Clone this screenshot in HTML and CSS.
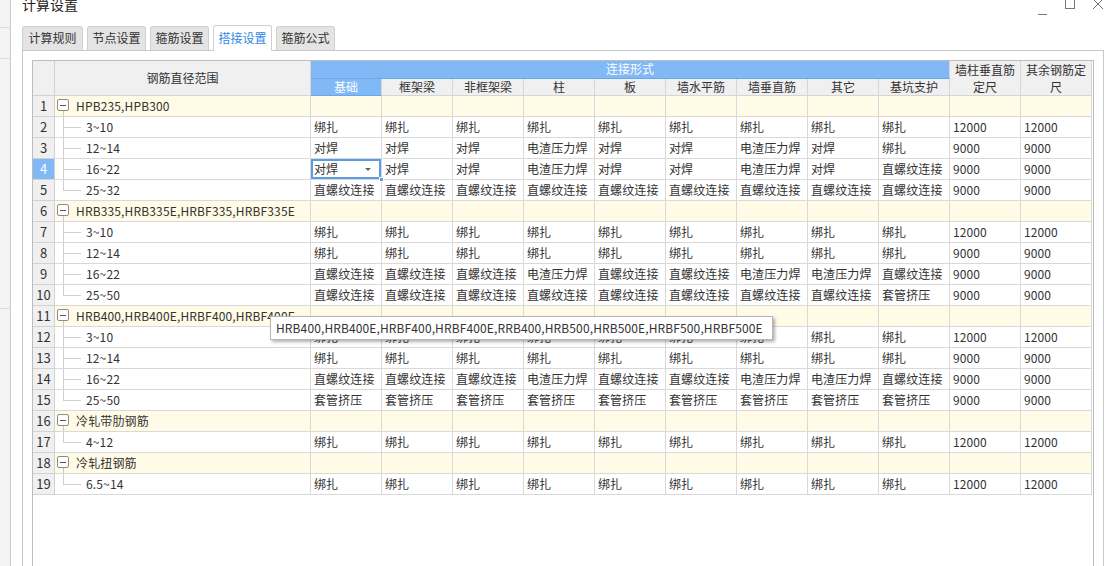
FILE: index.html
```html
<!DOCTYPE html>
<html lang="zh-CN">
<head>
<meta charset="utf-8">
<title>计算设置</title>
<link rel="stylesheet" href="styles.css">
</head>
<body>
<div class="app">
  <div class="side">
    <div class="side-a"></div>
    <div class="side-b"></div>
    <div class="side-c"></div>
    <div class="side-d"></div>
  </div>
  <div class="dialog">
    <div class="titlebar">
      <div class="title">计算设置</div>
      <svg class="controls" width="70" height="20" viewBox="0 0 70 20">
        <line x1="3" y1="14.5" x2="12" y2="14.5" stroke="#777" stroke-width="1"/>
        <rect x="30.5" y="-3" width="9" height="11.5" fill="none" stroke="#777" stroke-width="1"/>
        <line x1="58" y1="-1" x2="68" y2="9" stroke="#777" stroke-width="1"/>
        <line x1="68" y1="-1" x2="58" y2="9" stroke="#777" stroke-width="1"/>
      </svg>
    </div>
    <div class="tabs">
      <div class="tab first">计算规则</div>
      <div class="tab">节点设置</div>
      <div class="tab">箍筋设置</div>
      <div class="tab active">搭接设置</div>
      <div class="tab">箍筋公式</div>
    </div>
    <div class="panel">
      <div class="grid">
        <table>
          <colgroup>
            <col class="c-rn"><col class="c-nm">
            <col class="c-d"><col class="c-d"><col class="c-d"><col class="c-d"><col class="c-d"><col class="c-d"><col class="c-d"><col class="c-d"><col class="c-d"><col class="c-d"><col class="c-d">
          </colgroup>
          <thead>
            <tr>
              <th rowspan="2" class="rn"></th>
              <th rowspan="2">钢筋直径范围</th>
              <th colspan="9" class="blue top">连接形式</th>
              <th rowspan="2" class="wrap">墙柱垂直筋定尺</th>
              <th rowspan="2" class="wrap">其余钢筋定尺</th>
            </tr>
            <tr>
              <th class="blue">基础</th>
              <th>框架梁</th>
              <th>非框架梁</th>
              <th>柱</th>
              <th>板</th>
              <th>墙水平筋</th>
              <th>墙垂直筋</th>
              <th>其它</th>
              <th>基坑支护</th>
            </tr>
          </thead>
          <tbody>
            <tr class="grp"><td class="rn">1</td><td class="nm"><span class="box"></span>HPB235,HPB300</td><td></td><td></td><td></td><td></td><td></td><td></td><td></td><td></td><td></td><td></td><td></td></tr>
            <tr><td class="rn">2</td><td class="nm"><span class="tree"></span>3~10</td><td>绑扎</td><td>绑扎</td><td>绑扎</td><td>绑扎</td><td>绑扎</td><td>绑扎</td><td>绑扎</td><td>绑扎</td><td>绑扎</td><td>12000</td><td>12000</td></tr>
            <tr><td class="rn">3</td><td class="nm"><span class="tree"></span>12~14</td><td>对焊</td><td>对焊</td><td>对焊</td><td>电渣压力焊</td><td>对焊</td><td>对焊</td><td>电渣压力焊</td><td>对焊</td><td>绑扎</td><td>9000</td><td>9000</td></tr>
            <tr><td class="rn cur">4</td><td class="nm"><span class="tree"></span>16~22</td><td class="sel">对焊<span class="caret"></span><span class="handle"></span></td><td>对焊</td><td>对焊</td><td>电渣压力焊</td><td>对焊</td><td>对焊</td><td>电渣压力焊</td><td>对焊</td><td>直螺纹连接</td><td>9000</td><td>9000</td></tr>
            <tr><td class="rn">5</td><td class="nm"><span class="tree last"></span>25~32</td><td>直螺纹连接</td><td>直螺纹连接</td><td>直螺纹连接</td><td>直螺纹连接</td><td>直螺纹连接</td><td>直螺纹连接</td><td>直螺纹连接</td><td>直螺纹连接</td><td>直螺纹连接</td><td>9000</td><td>9000</td></tr>
            <tr class="grp"><td class="rn">6</td><td class="nm"><span class="box"></span>HRB335,HRB335E,HRBF335,HRBF335E</td><td></td><td></td><td></td><td></td><td></td><td></td><td></td><td></td><td></td><td></td><td></td></tr>
            <tr><td class="rn">7</td><td class="nm"><span class="tree"></span>3~10</td><td>绑扎</td><td>绑扎</td><td>绑扎</td><td>绑扎</td><td>绑扎</td><td>绑扎</td><td>绑扎</td><td>绑扎</td><td>绑扎</td><td>12000</td><td>12000</td></tr>
            <tr><td class="rn">8</td><td class="nm"><span class="tree"></span>12~14</td><td>绑扎</td><td>绑扎</td><td>绑扎</td><td>绑扎</td><td>绑扎</td><td>绑扎</td><td>绑扎</td><td>绑扎</td><td>绑扎</td><td>9000</td><td>9000</td></tr>
            <tr><td class="rn">9</td><td class="nm"><span class="tree"></span>16~22</td><td>直螺纹连接</td><td>直螺纹连接</td><td>直螺纹连接</td><td>电渣压力焊</td><td>直螺纹连接</td><td>直螺纹连接</td><td>电渣压力焊</td><td>电渣压力焊</td><td>直螺纹连接</td><td>9000</td><td>9000</td></tr>
            <tr><td class="rn">10</td><td class="nm"><span class="tree last"></span>25~50</td><td>直螺纹连接</td><td>直螺纹连接</td><td>直螺纹连接</td><td>直螺纹连接</td><td>直螺纹连接</td><td>直螺纹连接</td><td>直螺纹连接</td><td>直螺纹连接</td><td>套管挤压</td><td>9000</td><td>9000</td></tr>
            <tr class="grp"><td class="rn">11</td><td class="nm"><span class="box"></span>HRB400,HRB400E,HRBF400,HRBF400E,</td><td></td><td></td><td></td><td></td><td></td><td></td><td></td><td></td><td></td><td></td><td></td></tr>
            <tr><td class="rn">12</td><td class="nm"><span class="tree"></span>3~10</td><td>绑扎</td><td>绑扎</td><td>绑扎</td><td>绑扎</td><td>绑扎</td><td>绑扎</td><td>绑扎</td><td>绑扎</td><td>绑扎</td><td>12000</td><td>12000</td></tr>
            <tr><td class="rn">13</td><td class="nm"><span class="tree"></span>12~14</td><td>绑扎</td><td>绑扎</td><td>绑扎</td><td>绑扎</td><td>绑扎</td><td>绑扎</td><td>绑扎</td><td>绑扎</td><td>绑扎</td><td>9000</td><td>9000</td></tr>
            <tr><td class="rn">14</td><td class="nm"><span class="tree"></span>16~22</td><td>直螺纹连接</td><td>直螺纹连接</td><td>直螺纹连接</td><td>电渣压力焊</td><td>直螺纹连接</td><td>直螺纹连接</td><td>电渣压力焊</td><td>电渣压力焊</td><td>直螺纹连接</td><td>9000</td><td>9000</td></tr>
            <tr><td class="rn">15</td><td class="nm"><span class="tree last"></span>25~50</td><td>套管挤压</td><td>套管挤压</td><td>套管挤压</td><td>套管挤压</td><td>套管挤压</td><td>套管挤压</td><td>套管挤压</td><td>套管挤压</td><td>套管挤压</td><td>9000</td><td>9000</td></tr>
            <tr class="grp"><td class="rn">16</td><td class="nm"><span class="box"></span>冷轧带肋钢筋</td><td></td><td></td><td></td><td></td><td></td><td></td><td></td><td></td><td></td><td></td><td></td></tr>
            <tr><td class="rn">17</td><td class="nm"><span class="tree last"></span>4~12</td><td>绑扎</td><td>绑扎</td><td>绑扎</td><td>绑扎</td><td>绑扎</td><td>绑扎</td><td>绑扎</td><td>绑扎</td><td>绑扎</td><td>12000</td><td>12000</td></tr>
            <tr class="grp"><td class="rn">18</td><td class="nm"><span class="box"></span>冷轧扭钢筋</td><td></td><td></td><td></td><td></td><td></td><td></td><td></td><td></td><td></td><td></td><td></td></tr>
            <tr><td class="rn">19</td><td class="nm"><span class="tree last"></span>6.5~14</td><td>绑扎</td><td>绑扎</td><td>绑扎</td><td>绑扎</td><td>绑扎</td><td>绑扎</td><td>绑扎</td><td>绑扎</td><td>绑扎</td><td>12000</td><td>12000</td></tr>
          </tbody>
        </table>
      </div>
    </div>
  </div>
</div>
<div class="tooltip">HRB400,HRB400E,HRBF400,HRBF400E,RRB400,HRB500,HRB500E,HRBF500,HRBF500E</div>
</body>
</html>
```
FILE: styles.css
```css
* { box-sizing: border-box; }
html, body {
  margin: 0;
  height: 100%;
  overflow: hidden;
  background: #fff;
  color: #333;
  font-family: "Noto Sans CJK SC", "Noto Sans", sans-serif;
  font-size: 12px;
}
body { position: relative; }

.app { display: flex; height: 566px; }

.side {
  width: 11px;
  flex: none;
  background: #f4f4f4;
  border-right: 1px solid #cbcbcb;
  display: flex;
  flex-direction: column;
}
.side-a { height: 28px; border-bottom: 1px solid #dedede; }
.side-b { height: 31px; border-bottom: 1px solid #dedede; }
.side-c { height: 250px; border-bottom: 1px solid #dedede; }
.side-d { flex: 1; }

.dialog {
  flex: 1;
  display: flex;
  flex-direction: column;
  padding: 0 5px 0 11px;
  min-width: 0;
}

.titlebar {
  height: 26px;
  display: flex;
  justify-content: space-between;
  align-items: flex-start;
}
.title {
  font-size: 14px;
  line-height: 14px;
  margin-top: -3px;
  color: #222;
}
.controls { display: block; overflow: hidden; margin-right: -1px; }

.tabs {
  display: flex;
  gap: 4px;
  height: 24px;
  position: relative;
  z-index: 1;
}
.tab {
  width: 59px;
  background: #e4e4e4;
  border: 1px solid #d0d0d0;
  border-bottom: none;
  border-radius: 3px 3px 0 0;
  text-align: center;
  line-height: 22px;
  font-size: 12px;
  color: #333;
}
.tab.first { width: 61px; }
.tab.active {
  background: #fff;
  color: #2f88e4;
  margin-top: -1px;
  margin-bottom: -1px;
  line-height: 24px;
}

.panel {
  flex: 1;
  border: 1px solid #c9c9c9;
  border-bottom: none;
  padding: 9px 9px 0 9px;
  min-height: 0;
}

.grid {
  width: 1062px;
  height: 100%;
  border: 1px solid #bdbdbd;
  border-bottom: none;
}

table {
  border-collapse: separate;
  border-spacing: 0;
  table-layout: fixed;
  width: 1059px;
}
col.c-rn { width: 22px; }
col.c-nm { width: 256px; }
col.c-d { width: 71px; }

th {
  height: 17px;
  padding: 0 2px;
  font-weight: normal;
  font-size: 12px;
  line-height: 16px;
  background: #f0f0f0;
  color: #333;
  border-right: 1px solid #d6d6d6;
  border-bottom: 1px solid #d6d6d6;
  text-align: center;
  vertical-align: middle;
}
th.blue {
  background: #80b9f6;
  color: #fff;
  border-bottom-color: #6aa6ea;
}
th.top { border-right-color: #d6d6d6; }
th.wrap { line-height: 17px; }

td {
  height: 21px;
  padding: 0 3px;
  line-height: 20px;
  border-right: 1px solid #d9d9d9;
  border-bottom: 1px solid #d9d9d9;
  white-space: nowrap;
  overflow: hidden;
  font-size: 12px;
  color: #333;
  vertical-align: top;
  letter-spacing: 0.1px;
}
td.rn, th.rn {
  background: #f0f0f0;
  text-align: center;
  padding: 0;
  font-size: 13px;
  border-color: #d2d2d2;
  letter-spacing: 0;
}
td.rn.cur { background: #80b9f6; color: #fff; }

tr.grp td { background: #fffbe6; }
tr.grp td.rn { background: #f0f0f0; }

td.nm { padding: 0; letter-spacing: 0.15px; }
tr.grp td.nm {
  background: linear-gradient(#c8c8c8, #c8c8c8) 8px 100% / 1px 5px no-repeat, #fffbe6;
}
.box {
  display: inline-block;
  width: 12px;
  height: 12px;
  margin: 3px 7px 0 2px;
  vertical-align: top;
  border: 1px solid #8c8c8c;
  border-radius: 2px;
  background: linear-gradient(#555, #555) center / 6px 1px no-repeat, #fff;
}
.tree {
  display: inline-block;
  width: 18px;
  height: 20px;
  margin: 0 5px 0 8px;
  vertical-align: top;
  background:
    linear-gradient(#cfcfcf, #cfcfcf) 0 0 / 1px 100% no-repeat,
    linear-gradient(#cfcfcf, #cfcfcf) 0 10px / 100% 1px no-repeat;
}
.tree.last {
  background:
    linear-gradient(#cfcfcf, #cfcfcf) 0 0 / 1px 11px no-repeat,
    linear-gradient(#cfcfcf, #cfcfcf) 0 10px / 100% 1px no-repeat;
}

td.sel {
  position: relative;
  overflow: visible;
  box-shadow: inset 0 0 0 2px #5a9de6;
}
.caret {
  float: right;
  width: 0;
  height: 0;
  margin: 9px 7px 0 0;
  border-left: 3px solid transparent;
  border-right: 3px solid transparent;
  border-top: 3px solid #666;
}
.handle {
  position: absolute;
  right: -3px;
  bottom: -3px;
  width: 5px;
  height: 5px;
  background: #5a9de6;
  border: 1px solid #fff;
}

.tooltip {
  position: absolute;
  left: 270px;
  top: 316px;
  width: 503px;
  height: 24px;
  padding: 0 5px;
  line-height: 22px;
  font-size: 12px;
  letter-spacing: 0.12px;
  color: #333;
  background: #fff;
  border: 1px solid #b5b5b5;
  box-shadow: 2px 2px 3px rgba(0, 0, 0, 0.3);
  white-space: nowrap;
  z-index: 5;
}
```
